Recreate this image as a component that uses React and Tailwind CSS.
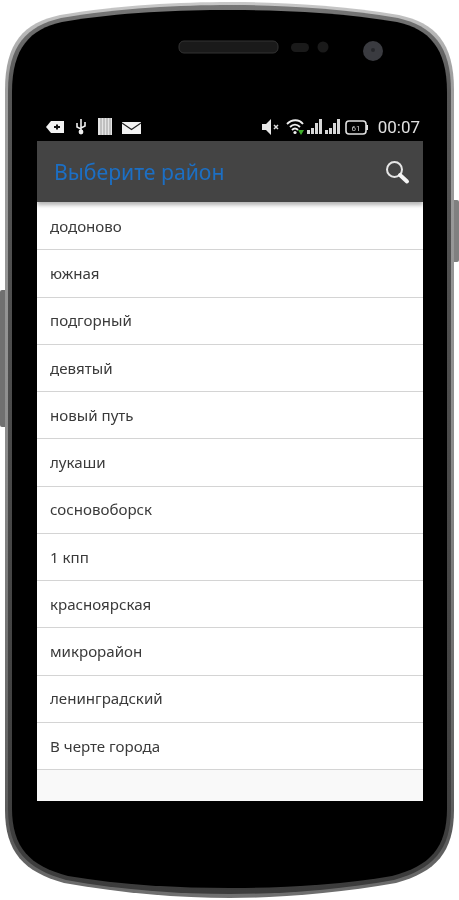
import React from 'react';

const districts = [
  'додоново',
  'южная',
  'подгорный',
  'девятый',
  'новый путь',
  'лукаши',
  'сосновоборск',
  '1 кпп',
  'красноярская',
  'микрорайон',
  'ленинградский',
  'В черте города',
];

function PhoneBody() {
  return (
    <svg className="absolute inset-0 blur-[0.5px]" width="459" height="900" viewBox="0 0 459 900">
      <defs>
        <linearGradient id="edge" x1="0" y1="0" x2="0" y2="1">
          <stop offset="0" stopColor="#c8c8c8" />
          <stop offset="0.08" stopColor="#a0a0a0" />
          <stop offset="0.5" stopColor="#8c8c8c" />
          <stop offset="0.93" stopColor="#5a5a5a" />
          <stop offset="1" stopColor="#707070" />
        </linearGradient>
        <linearGradient id="rim" x1="0" y1="0" x2="0" y2="1">
          <stop offset="0" stopColor="#777777" />
          <stop offset="0.1" stopColor="#555555" />
          <stop offset="1" stopColor="#3c3c3c" />
        </linearGradient>
      </defs>
      <rect x="0" y="290" width="8" height="137" rx="2" fill="#707070" />
      <rect x="451" y="200" width="8" height="62" rx="2" fill="#808080" />
      <path
        d="M5 90 C5 42 24 23 60 15 C120 5 180 2 230 2 C280 2 340 5 399 15 C435 23 454 42 454 90 L454 810 C454 852 436 872 396 883 C340 893 280 898 230 898 C180 898 120 893 64 883 C24 872 5 852 5 810 Z"
        fill="url(#edge)"
      />
      <path
        d="M8 91 C8 45 27 26 61 18 C120 8 180 5 230 5 C280 5 340 8 398 18 C432 26 451 45 451 91 L451 809 C451 850 433 869 394 880 C340 890 280 894 230 894 C180 894 120 890 66 880 C27 869 8 850 8 809 Z"
        fill="url(#rim)"
      />
      <path
        d="M12 92 C12 48 30 29 62 22 C120 12 180 10 230 10 C280 10 340 12 397 22 C429 29 447 48 447 92 L447 808 C447 848 430 866 392 876 C340 885 280 888 230 888 C180 888 120 885 68 876 C30 866 12 848 12 808 Z"
        fill="#000000"
      />
      <rect x="179" y="41" width="99" height="12" rx="5" fill="#1a1a1a" stroke="#333333" />
      <rect x="291" y="43" width="18" height="9" rx="4.5" fill="#1a1a1a" />
      <circle cx="323" cy="47" r="5.5" fill="#1a1a1a" />
      <circle cx="373" cy="51" r="10" fill="#3a3b40" />
      <circle cx="373" cy="50" r="2" fill="#26272b" />
    </svg>
  );
}

function StatusLeftIcons() {
  return (
    <svg width="96" height="18" viewBox="0 0 96 18">
      <path d="M0 9 L5 3 H18 V15 H5 Z" fill="#f2f2f2" />
      <path d="M8 9 H14 M11 6.5 V11.5" stroke="#111111" strokeWidth="2" />
      <path d="M35 1 V13 M31 5 V9 L35 11 M39 4 V8 L35 10" stroke="#eeeeee" strokeWidth="1.6" fill="none" />
      <circle cx="35" cy="14" r="2.4" fill="#eeeeee" />
      <rect x="52" y="0" width="14" height="17" fill="#e4e4e4" />
      <path d="M55 0 V17 M58 0 V17 M61 0 V17 M64 0 V17" stroke="#8a8a8a" strokeWidth="0.8" />
      <rect x="76" y="4" width="19" height="12" fill="#f2f2f2" />
      <path d="M76 5 L85.5 11.5 L95 5" stroke="#222222" strokeWidth="1.2" fill="none" />
    </svg>
  );
}

function StatusRightIcons() {
  return (
    <svg width="106" height="18" viewBox="0 0 106 18">
      <path d="M0 6 H4 L9 1 V17 L4 12 H0 Z" fill="#e8e8e8" />
      <path d="M12 7 L16 11 M16 7 L12 11" stroke="#dddddd" strokeWidth="1.5" />
      <path d="M25 6 C30 1 37 1 41 6 M28 9 C31 6 35 6 38 9 M30 12 C32 10 34 10 36 12" stroke="#eeeeee" strokeWidth="1.9" fill="none" />
      <circle cx="33" cy="14.5" r="1.6" fill="#eeeeee" />
      <path d="M36 12 L42 12 L39 17 Z" fill="#3fae2a" />
      <path d="M45 12 h3 v4 h-3 Z M49 10 h3 v6 h-3 Z M53 5 h3 v11 h-3 Z M57 1 h3 v15 h-3 Z" fill="#d8d8d8" />
      <path d="M63 12 h3 v4 h-3 Z M67 10 h3 v6 h-3 Z M71 5 h3 v11 h-3 Z M75 1 h3 v15 h-3 Z" fill="#d8d8d8" />
      <rect x="84" y="3" width="20" height="13" rx="3" fill="none" stroke="#e0e0e0" strokeWidth="1.6" />
      <rect x="104" y="7" width="2" height="5" fill="#e0e0e0" />
      <text x="94" y="13" textAnchor="middle" fontSize="8" fill="#d0d0d0" fontFamily="Roboto, sans-serif">61</text>
    </svg>
  );
}

function SearchGlyph() {
  return (
    <svg width="26" height="26" viewBox="0 0 26 26">
      <circle cx="10.5" cy="10.5" r="7.5" fill="none" stroke="#e6e6e6" strokeWidth="2" />
      <path d="M16 16 L23 22.5" stroke="#f5f5f5" strokeWidth="4" strokeLinecap="round" />
    </svg>
  );
}

export default function App() {
  return (
    <div className="relative w-[459px] h-[900px] bg-white overflow-hidden font-['Noto_Sans',sans-serif]">
      <PhoneBody />
      <div className="relative ml-[37px] pt-[113px] w-[386px] blur-[0.5px]">
        <div className="flex items-center justify-between h-[28px] bg-black pl-[9px] pr-[3px]">
          <StatusLeftIcons />
          <div className="flex items-center gap-[10px]">
            <StatusRightIcons />
            <span className="text-[17px] leading-none text-[#e0e0e0] font-['Roboto',sans-serif]">00:07</span>
          </div>
        </div>
        <div className="relative z-10 flex items-center justify-between h-[61px] bg-[#444444] pl-[17px] pr-[13px] shadow-[0_3px_4px_rgba(0,0,0,0.3)]">
          <h1 className="text-[21.2px] font-normal text-[#1c6fc4]">Выберите район</h1>
          <SearchGlyph />
        </div>
        <div className="h-[599px] bg-[#f9f9f9]">
          <ul className="bg-white pt-[1px]">
            {districts.map((name) => (
              <li key={name} className="flex items-center h-[47.25px] pl-[13px] border-b border-[#d4d4d4] text-[15.1px] text-[#3a3a3a]">
                {name}
              </li>
            ))}
          </ul>
        </div>
      </div>
    </div>
  );
}
